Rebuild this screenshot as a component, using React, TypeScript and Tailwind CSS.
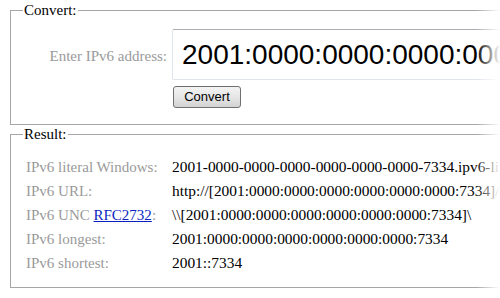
export default function App() {
  const rows = [
    { label: <>IPv6 literal Windows:</>, value: "2001-0000-0000-0000-0000-0000-0000-7334.ipv6-literal.net" },
    { label: <>IPv6 URL:</>, value: "http://[2001:0000:0000:0000:0000:0000:0000:7334]/" },
    {
      label: (
        <>
          IPv6 UNC{" "}
          <a href="#" className="text-[#0a1fc2] underline">
            RFC2732
          </a>
          :
        </>
      ),
      value: "\\\\[2001:0000:0000:0000:0000:0000:0000:7334]\\",
    },
    { label: <>IPv6 longest:</>, value: "2001:0000:0000:0000:0000:0000:0000:7334" },
    { label: <>IPv6 shortest:</>, value: "2001::7334" },
  ]

  return (
    <div className="relative w-[500px] h-[298px] overflow-hidden bg-white font-['Liberation_Serif',serif] text-[15px] text-black">
      {/* Convert */}
      <fieldset className="ml-[10px] mt-[1px] w-[540px] border border-[#a6a6a6] pl-[12px] pt-[10px] pb-[16px]">
        <legend className="px-[1px] leading-[18px]">Convert:</legend>
        <div className="flex items-center">
          <label className="w-[144px] pt-[3px] text-right leading-[18px] text-[#9a9a9a]">Enter IPv6 address:</label>
          <input
            readOnly
            defaultValue="2001:0000:0000:0000:0000:0000:0000:7334"
            className="ml-[5px] h-[51px] w-[420px] rounded-[2px] border border-[#e0e4ec] border-t-[#abadb3] pl-[9px] font-['Liberation_Sans',Arial,sans-serif] text-[28px] text-black outline-none"
          />
        </div>
        <button className="ml-[150px] mt-[6px] flex h-[22px] w-[68px] items-center justify-center rounded-[3px] border border-[#707070] bg-linear-to-b from-[#f3f3f3] via-[#e6e6e6] to-[#d3d3d3] font-['Liberation_Sans',Arial,sans-serif] text-[13px] text-black">
          Convert
        </button>
      </fieldset>

      {/* Result */}
      <fieldset className="ml-[10px] w-[540px] border border-[#a6a6a6] pl-[12px] pt-[12px] pb-[12px]">
        <legend className="px-[1px] leading-[18px]">Result:</legend>
        <div className="grid grid-cols-[146px_1fr] pl-[3px] leading-[24px]">
          {rows.map((r, i) => (
            <div key={i} className="contents">
              <div className="whitespace-nowrap text-[#9a9a9a]">{r.label}</div>
              <div className="whitespace-nowrap text-[15.4px]">{r.value}</div>
            </div>
          ))}
        </div>
      </fieldset>

      <div className="pointer-events-none absolute right-0 top-0 h-full w-[24px] bg-linear-to-l from-white to-transparent" />
    </div>
  )
}
